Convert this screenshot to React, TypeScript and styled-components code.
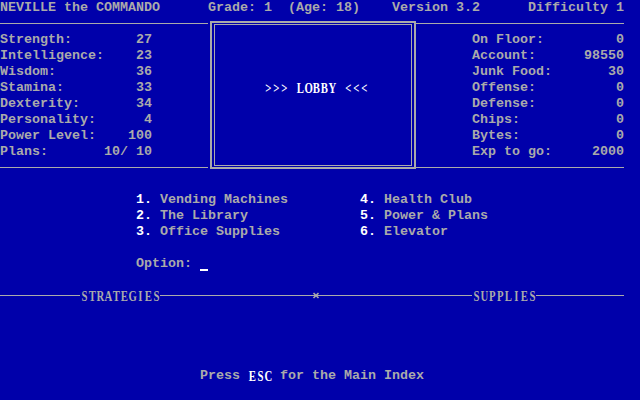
import React from "react";
import styled, { createGlobalStyle } from "styled-components";

const GRAY = "#aaaaaa";
const WHITE = "#ffffff";
const BLUE = "#0000aa";
const CW = 8;
const RH = 16;
const SERIF_SCALE = 0.74;

const Global = createGlobalStyle`
  html, body { margin: 0; padding: 0; background: ${BLUE}; }
  body { width: 640px; height: 400px; overflow: hidden; }
`;

const Screen = styled.div`
  width: 640px;
  height: 400px;
  background: ${BLUE};
  color: ${GRAY};
  font-family: "Liberation Mono", "DejaVu Sans Mono", monospace;
  font-size: 13.33px;
  font-weight: 700;
  line-height: ${RH}px;
  white-space: pre;
  display: flex;
  flex-direction: column;
  overflow: hidden;
`;

const Row = styled.div<{ $indent?: number }>`
  display: flex;
  height: ${RH}px;
  flex: none;
  padding-left: ${(p) => (p.$indent ?? 0) * CW}px;
`;

const Gap = styled.div<{ $rows: number }>`
  height: ${(p) => p.$rows * RH}px;
  flex: none;
`;

const Cell = styled.span<{ $cols: number }>`
  width: ${(p) => p.$cols * CW}px;
  flex: none;
`;

const TopPanel = styled.div`
  display: grid;
  grid-template-columns: 208px 208px 224px;
  height: ${RH * 10}px;
  flex: none;
`;

const Side = styled.div`
  display: flex;
  flex-direction: column;
`;

const Rule = styled.div<{ $w: number }>`
  width: ${(p) => p.$w}px;
  height: 1px;
  background: ${GRAY};
  margin: 7px 0 8px;
  flex: none;
`;

const StatList = styled.div<{ $indent: number }>`
  display: flex;
  flex-direction: column;
  padding-left: ${(p) => p.$indent * CW}px;
`;

const Stat = styled.div`
  display: flex;
  justify-content: space-between;
  width: ${19 * CW}px;
  height: ${RH}px;
`;

const LobbyFrame = styled.div`
  box-sizing: border-box;
  width: 206px;
  height: 148px;
  margin: 5px 0 7px 2px;
  border: 2px solid ${GRAY};
  padding: 1px 2px;
`;

const LobbyInner = styled.div`
  box-sizing: border-box;
  height: 100%;
  border: 1px solid ${GRAY};
  padding: 55px 0 0 49px;
  color: ${WHITE};
`;

const Menu = styled.div`
  display: grid;
  grid-template-columns: ${28 * CW}px auto;
  grid-template-rows: repeat(3, ${RH}px);
  grid-auto-flow: column;
  padding-left: ${17 * CW}px;
  flex: none;
`;

const Key = styled.span`
  color: ${WHITE};
`;

const Cursor = styled.span`
  display: block;
  width: ${CW}px;
  height: 2px;
  margin-top: 13px;
  background: ${WHITE};
`;

const Divider = styled.div`
  display: flex;
  width: ${78 * CW}px;
  height: ${RH}px;
  flex: none;
`;

const Seg = styled.div<{ $w: number }>`
  width: ${(p) => p.$w}px;
  height: 1px;
  margin-top: 7px;
  background: ${GRAY};
  flex: none;
`;

const Label = styled.div<{ $w: number }>`
  width: ${(p) => p.$w}px;
  flex: none;
`;

const Marker = styled.svg`
  width: ${CW}px;
  height: ${RH}px;
  flex: none;
  display: block;
`;

const SerifRun = styled.span<{ $white?: boolean }>`
  font-family: "Liberation Serif", "DejaVu Serif", serif;
  font-size: 14.5px;
  font-weight: 700;
  color: ${(p) => (p.$white ? WHITE : GRAY)};
`;

const Glyph = styled.span`
  display: inline-block;
  width: ${CW / SERIF_SCALE}px;
  margin: 0 ${-(CW / SERIF_SCALE - CW) / 2}px;
  text-align: center;
  transform: scaleX(${SERIF_SCALE});
`;

const Serif: React.FC<{ text: string; white?: boolean }> = ({ text, white }) => (
  <SerifRun $white={white}>
    {text.split("").map((ch, i) => (
      <Glyph key={i}>{ch === " " ? "\u00a0" : ch}</Glyph>
    ))}
  </SerifRun>
);

const leftStats: [string, string][] = [
  ["Strength:", "27"],
  ["Intelligence:", "23"],
  ["Wisdom:", "36"],
  ["Stamina:", "33"],
  ["Dexterity:", "34"],
  ["Personality:", "4"],
  ["Power Level:", "100"],
  ["Plans:", "10/ 10"],
];

const rightStats: [string, string][] = [
  ["On Floor:", "0"],
  ["Account:", "98550"],
  ["Junk Food:", "30"],
  ["Offense:", "0"],
  ["Defense:", "0"],
  ["Chips:", "0"],
  ["Bytes:", "0"],
  ["Exp to go:", "2000"],
];

const menu = [
  ["1.", "Vending Machines"],
  ["2.", "The Library"],
  ["3.", "Office Supplies"],
  ["4.", "Health Club"],
  ["5.", "Power & Plans"],
  ["6.", "Elevator"],
];

export default function App() {
  return (
    <>
      <Global />
      <Screen>
        <Row>
          <Cell $cols={26}>NEVILLE the COMMANDO</Cell>
          <Cell $cols={23}>Grade: 1  (Age: 18)</Cell>
          <Cell $cols={17}>Version 3.2</Cell>
          <Cell $cols={12}>Difficulty 1</Cell>
        </Row>
        <TopPanel>
          <Side>
            <Rule $w={208} />
            <StatList $indent={0}>
              {leftStats.map(([k, v]) => (
                <Stat key={k}>
                  <span>{k}</span>
                  <span>{v}</span>
                </Stat>
              ))}
            </StatList>
            <Rule $w={208} />
          </Side>
          <LobbyFrame>
            <LobbyInner>
              <Serif text=">>> LOBBY <<<" white />
            </LobbyInner>
          </LobbyFrame>
          <Side>
            <Rule $w={208} />
            <StatList $indent={7}>
              {rightStats.map(([k, v]) => (
                <Stat key={k}>
                  <span>{k}</span>
                  <span>{v}</span>
                </Stat>
              ))}
            </StatList>
            <Rule $w={208} />
          </Side>
        </TopPanel>
        <Gap $rows={1} />
        <Menu>
          {menu.map(([n, t]) => (
            <span key={n}>
              <Key>{n}</Key> {t}
            </span>
          ))}
        </Menu>
        <Gap $rows={1} />
        <Row $indent={17}>
          <span>Option: </span>
          <Cursor />
        </Row>
        <Gap $rows={1} />
        <Divider>
          <Seg $w={80} />
          <Label $w={80}>
            <Serif text="STRATEGIES" />
          </Label>
          <Seg $w={152} />
          <Marker viewBox="0 0 8 16">
            <path d="M1.5 5 L6.5 10 M6.5 5 L1.5 10" stroke={GRAY} strokeWidth="1.6" fill="none" />
            <path d="M0 7.5 H8" stroke={GRAY} strokeWidth="1" />
          </Marker>
          <Seg $w={152} />
          <Label $w={64}>
            <Serif text="SUPPLIES" />
          </Label>
          <Seg $w={88} />
        </Divider>
        <Gap $rows={4} />
        <Row $indent={25}>
          <span>Press </span>
          <Serif text="ESC" white />
          <span> for the Main Index</span>
        </Row>
      </Screen>
    </>
  );
}
